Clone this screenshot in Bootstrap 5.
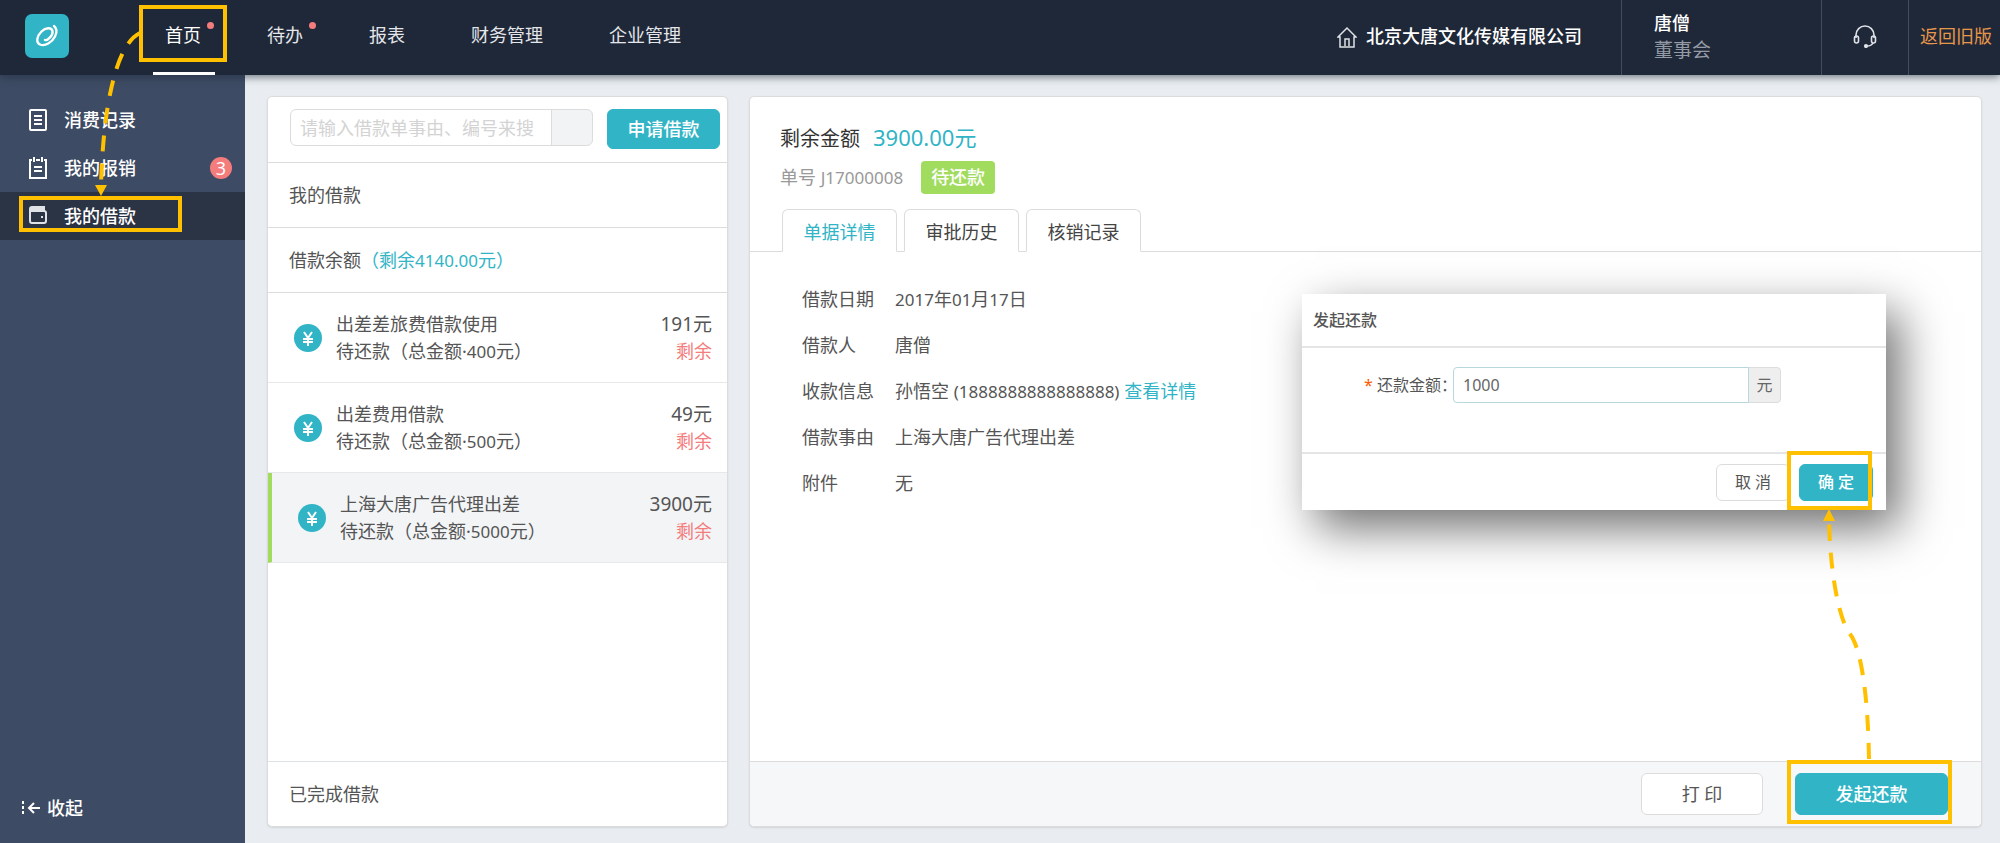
<!DOCTYPE html>
<html lang="zh-CN">
<head>
<meta charset="utf-8">
<meta name="viewport" content="width=device-width, initial-scale=1">
<title>我的借款</title>
<link href="https://cdn.jsdelivr.net/npm/bootstrap@5.3.0/dist/css/bootstrap.min.css" rel="stylesheet">
<style>
  :root { --teal: #31b4c6; --line: #dcdcdc; --mark-color: #ffc000; }
  body { font-family: "Noto Sans", "Noto Sans CJK SC", sans-serif; font-size: 18px; line-height: 27px; color: #555; background: #e9edf1; }
  a { text-decoration: none; }
  .num { font-size: 17px; }
  .teal-text { color: var(--teal); }
  .coral-text { color: #f47c7c; }
  .btn { font-size: 18px; line-height: 27px; border-radius: 6px; border-color: var(--line); color: #555; background: #fff; }
  .btn-teal, .btn-teal:hover { background: var(--teal); border-color: var(--teal); color: #fff; font-weight: 500; }

  /* top bar */
  .topbar { height: 75px; background: #1f2838; color: #fff; box-shadow: 0 2px 8px rgba(31, 40, 56, .6); z-index: 2; }
  .brand-box { width: 132px; padding-left: 25px; }
  .topbar .nav-link { padding: 0 33px 5px; color: #e4e6ea; display: flex; align-items: center; position: relative; }
  .topbar .nav-link.active { color: #fff; }
  .topbar .nav-link.active::after { content: ""; position: absolute; left: 21px; right: 19px; bottom: 0; height: 3px; background: #fff; }
  .dot { position: absolute; top: 22px; right: 20px; width: 7px; height: 7px; border-radius: 50%; background: #f47c7c; }
  .cell { border-left: 1px solid #454d5c; }
  .company { padding: 0 39px 2px 0; gap: 9px; }
  .user-cell { width: 200px; padding: 0 0 2px 32px; }
  .help-cell { width: 87px; padding-bottom: 4px; }
  .back-cell { width: 92px; padding: 0 0 2px 11px; white-space: nowrap; }
  .back-cell a { color: #e8964a; }
  .role-text { color: #959ba6; font-size: 19px; }

  /* side bar */
  .side { width: 245px; background: #3d4b64; padding: 21px 0 21px; }
  .side .nav-link { height: 48px; padding: 0 13px 0 27px; display: flex; align-items: center; gap: 15px; color: #fff; font-weight: 500; position: relative; }
  .side .nav-link.active { background: #2b3445; }
  .count { width: 22px; height: 22px; border-radius: 50%; background: #f47c7c; line-height: 22px; text-align: center; font-weight: 400; }
  .fold { background: none; border: 0; color: #fff; font-weight: 500; padding: 0 20px; gap: 7px; }

  /* panels */
  .work { padding: 21px 18px 16px 22px; gap: 21px; }
  .panel { background: #fff; border: 1px solid var(--line); border-radius: 5px; box-shadow: 0 1px 2px rgba(0, 0, 0, .1); }
  .loans { width: 461px; }
  .bar { height: 65px; padding: 0 21px; border-bottom: 1px solid var(--line); display: flex; align-items: center; }
  .search-bar { height: 66px; padding: 12px 7px 12px 22px; gap: 14px; align-items: flex-start; }
  .search-bar .form-control { font-size: 18px; height: 37px; padding: 0 9px; border-color: var(--line); border-radius: 6px; }
  .search-bar .form-control::placeholder { color: #d3d3d3; }
  .search-bar .input-group-text { width: 42px; background: #f2f3f5; border-color: var(--line); border-radius: 6px; }
  .search-bar .btn { padding: 5px 0; width: 113px; height: 40px; flex: none; }
  .loan { height: 90px; padding: 0 15px 0 26px; gap: 14px; border-bottom: 1px solid #e8e8e8; display: flex; align-items: center; color: #555; }
  .loan.current { background: #f2f4f6; border-left: 4px solid #a1dc5f; }
  .coin { width: 28px; height: 28px; }
  .amount { font-size: 19px; }

  .head { padding: 27px 30px 0; }
  .sum-label { font-size: 20px; color: #333; }
  .sum { font-size: 22px; margin-left: 13px; }
  .doc-no { color: #999; }
  .state { background: #a1dc5f; color: #fff; border-radius: 4px; padding: 3px 10px; margin-left: 18px; font-weight: 500; }
  .nav-tabs { margin-top: 15px; padding-left: 32px; gap: 7px; border-color: var(--line); }
  .nav-tabs .nav-link { width: 115px; height: 43px; padding: 9px 0 7px; text-align: center; color: #444; border: 1px solid var(--line); border-bottom-color: #fff; border-radius: 6px 6px 0 0; }
  .nav-tabs .nav-link.active { color: var(--teal); border-color: var(--line) var(--line) #fff; }
  .facts { padding: 24px 52px; }
  .facts dt { width: 93px; font-weight: 400; }
  .facts dl { margin: 0; height: 46px; display: flex; align-items: center; }
  .facts dd { margin: 0; }
  .foot { height: 65px; padding: 0 33px; gap: 32px; background: #f6f7f9; border-top: 1px solid var(--line); border-radius: 0 0 5px 5px; }
  .foot .btn { height: 42px; }
  .print { width: 122px; }
  .repay { width: 153px; }

  /* repayment dialog, floats over the detail panel */
  .dialog { position: absolute; top: 197px; right: 95px; width: 584px; background: #fff; font-size: 16px; box-shadow: 14px 18px 44px rgba(0, 0, 0, .56); }
  .dialog-title { height: 54px; padding: 0 11px; border-bottom: 2px solid #e5e5e5; font-size: 16px; font-weight: 500; }
  .dialog-body { height: 106px; padding: 19px 105px 0 62px; border-bottom: 2px solid #e5e5e5; }
  .dialog-body label { flex: none; width: 89px; white-space: nowrap; }
  .needed { color: #ff5a00; }
  .dialog-body .form-control { font-size: 16px; height: 36px; padding: 0 9px; color: #666; border-color: #b7d8dc; border-radius: 4px; }
  .dialog-body .input-group-text { width: 33px; padding: 0; justify-content: center; font-size: 16px; color: #666; background: #eee; border-color: #ddd; border-radius: 4px; }
  .dialog-foot { height: 56px; padding: 0 13px; gap: 9px; }
  .dialog-foot .btn { width: 74px; height: 37px; padding: 0; font-size: 16px; }

  /* walkthrough marks */
  .frame { position: absolute; border: 4px solid var(--mark-color); pointer-events: none; }
  .frame-home { left: 7px; right: 7px; top: 5px; height: 57px; }
  .frame-loan { left: 19px; width: 163px; top: 4px; height: 36px; }
  .frame-ok { right: 0; width: 85px; top: -14px; height: 59px; }
  .frame-repay { right: -5px; width: 165px; top: -14px; height: 64px; }
  .trail { position: absolute; pointer-events: none; fill: none; stroke: var(--mark-color); stroke-width: 4; }
  .trail polygon { fill: var(--mark-color); stroke: none; }
  .trail-start { left: 90px; top: 28px; z-index: 3; }
  .trail-end { right: 100px; bottom: 67px; }
</style>
</head>
<body class="min-vh-100 d-flex flex-column position-relative">

<header class="topbar d-flex position-relative">
  <div class="brand-box d-flex align-items-center">
    <a href="#" aria-label="首页" class="d-flex mb-1">
      <svg width="44" height="44" viewBox="0 0 44 44"><rect width="44" height="44" rx="7" fill="#31b4c6"/><path d="M20 26c2.500 1 8.500-5 7.500-9-1-4-7-3.500-11 .5-4.500 4.500-6 11-1.500 13 5 2.200 12-2 15-8 2-4 2-8-1-10.500" fill="none" stroke="#fff" stroke-width="2.400" stroke-linecap="round"/></svg>
    </a>
  </div>
  <nav class="nav">
    <a class="nav-link active" href="#">首页<span class="dot"></span><span class="frame frame-home"></span></a>
    <a class="nav-link" href="#">待办<span class="dot"></span></a>
    <a class="nav-link" href="#">报表</a>
    <a class="nav-link" href="#">财务管理</a>
    <a class="nav-link" href="#">企业管理</a>
  </nav>
  <div class="company d-flex align-items-center ms-auto">
    <svg width="20" height="22" viewBox="0 0 20 22" fill="none" stroke="#dfe2e6" stroke-width="1.500"><path d="M1 11 10 2l9 9h-2v10H3V11zM8 20v-7h4v7"/></svg>
    <span class="fw-medium">北京大唐文化传媒有限公司</span>
  </div>
  <div class="cell user-cell d-flex flex-column justify-content-center">
    <span class="fw-medium">唐僧</span><span class="role-text">董事会</span>
  </div>
  <div class="cell help-cell d-flex align-items-center justify-content-center">
    <svg width="24" height="24" viewBox="0 0 24 24" fill="none" stroke="#dfe2e6" stroke-width="1.600"><path d="M3 14V11a9 9 0 0 1 18 0v3"/><rect x="1.500" y="12" width="4" height="7" rx="2"/><rect x="18.500" y="12" width="4" height="7" rx="2"/><path d="M20 19c-1 2-3 3-6 3"/><circle cx="13" cy="22" r="1.300" fill="#dfe2e6"/></svg>
  </div>
  <div class="cell back-cell d-flex align-items-center"><a href="#">返回旧版</a></div>
</header>

<div class="d-flex flex-grow-1">
  <aside class="side d-flex flex-column">
    <nav class="nav flex-column">
      <a class="nav-link" href="#">
        <svg width="22" height="24" viewBox="0 0 22 24" fill="none" stroke="#fff" stroke-width="2"><rect x="3" y="2" width="16" height="20" rx="1"/><path d="M7 8h8M7 12h8M7 16h8"/></svg>消费记录</a>
      <a class="nav-link" href="#">
        <svg width="22" height="24" viewBox="0 0 22 24" fill="none" stroke="#fff" stroke-width="2"><path d="M5 4H3v18h16V4h-2M9 4h4M7 1v5M15 1v5M7 11h8M7 15h8"/></svg>我的报销<span class="count ms-auto">3</span></a>
      <a class="nav-link active" href="#">
        <svg width="22" height="24" viewBox="0 0 22 24" fill="none" stroke="#dfe2e6" stroke-width="2"><path d="M3 7V5q0-2 2-2h12v4M3 7h14q2 0 2 2v8q0 2-2 2H5q-2 0-2-2zM3 5h14"/><path d="M14 13h2"/></svg>我的借款<span class="frame frame-loan"></span></a>
    </nav>
    <button type="button" class="fold d-flex align-items-center mt-auto"><svg width="20" height="16" viewBox="0 0 20 16" fill="none" stroke="#fff" stroke-width="2"><path d="M3 0v14" stroke-dasharray="3 2"/><path d="M20 7H9M14 2 9 7l5 5"/></svg>收起</button>
  </aside>

  <main class="work d-flex flex-grow-1">
    <section class="panel loans d-flex flex-column">
      <form class="bar search-bar">
        <div class="input-group flex-nowrap">
          <input class="form-control" type="text" placeholder="请输入借款单事由、编号来搜" aria-label="搜索借款单">
          <span class="input-group-text"></span>
        </div>
        <button type="button" class="btn btn-teal">申请借款</button>
      </form>
      <div class="bar">我的借款</div>
      <div class="bar">借款余额<span class="teal-text">（剩余<span class="num">4140.00</span>元）</span></div>
      <a class="loan" href="#">
        <svg class="coin" viewBox="0 0 28 28"><circle cx="14" cy="14" r="14" fill="#31b4c6"/><path d="m10 8 4 6 4-6M9 15h10M9 18h10M14 14v8" fill="none" stroke="#fff" stroke-width="2"/></svg>
        <span>出差差旅费借款使用<br>待还款（总金额·<span class="num">400</span>元）</span>
        <span class="ms-auto text-end"><span class="amount">191元</span><br><span class="coral-text">剩余</span></span>
      </a>
      <a class="loan" href="#">
        <svg class="coin" viewBox="0 0 28 28"><circle cx="14" cy="14" r="14" fill="#31b4c6"/><path d="m10 8 4 6 4-6M9 15h10M9 18h10M14 14v8" fill="none" stroke="#fff" stroke-width="2"/></svg>
        <span>出差费用借款<br>待还款（总金额·<span class="num">500</span>元）</span>
        <span class="ms-auto text-end"><span class="amount">49元</span><br><span class="coral-text">剩余</span></span>
      </a>
      <a class="loan current" href="#">
        <svg class="coin" viewBox="0 0 28 28"><circle cx="14" cy="14" r="14" fill="#31b4c6"/><path d="m10 8 4 6 4-6M9 15h10M9 18h10M14 14v8" fill="none" stroke="#fff" stroke-width="2"/></svg>
        <span>上海大唐广告代理出差<br>待还款（总金额·<span class="num">5000</span>元）</span>
        <span class="ms-auto text-end"><span class="amount">3900元</span><br><span class="coral-text">剩余</span></span>
      </a>
      <div class="bar mt-auto border-bottom-0 border-top">已完成借款</div>
    </section>

    <section class="panel flex-grow-1 d-flex flex-column position-relative">
      <div class="head">
        <div><span class="sum-label">剩余金额</span><span class="sum teal-text">3900.00元</span></div>
        <div class="d-flex align-items-center pt-2"><span class="doc-no">单号 <span class="num">J17000008</span></span><span class="state">待还款</span></div>
      </div>
      <ul class="nav nav-tabs">
        <li class="nav-item"><a class="nav-link active" href="#">单据详情</a></li>
        <li class="nav-item"><a class="nav-link" href="#">审批历史</a></li>
        <li class="nav-item"><a class="nav-link" href="#">核销记录</a></li>
      </ul>
      <div class="facts flex-grow-1">
        <dl><dt>借款日期</dt><dd><span class="num">2017</span>年<span class="num">01</span>月<span class="num">17</span>日</dd></dl>
        <dl><dt>借款人</dt><dd>唐僧</dd></dl>
        <dl><dt>收款信息</dt><dd>孙悟空 <span class="num">(1888888888888888)</span> <a class="teal-text" href="#">查看详情</a></dd></dl>
        <dl><dt>借款事由</dt><dd>上海大唐广告代理出差</dd></dl>
        <dl><dt>附件</dt><dd>无</dd></dl>
      </div>
      <div class="foot d-flex align-items-center justify-content-end">
        <button type="button" class="btn print">打 印</button>
        <button type="button" class="btn btn-teal repay position-relative">发起还款<span class="frame frame-repay"></span></button>
      </div>

      <div class="dialog" role="dialog" aria-labelledby="dialog-title">
        <div class="dialog-title d-flex align-items-center" id="dialog-title">发起还款</div>
        <div class="dialog-body">
          <div class="d-flex align-items-center">
            <label for="repay-sum"><span class="needed">*</span> 还款金额：</label>
            <div class="input-group flex-nowrap">
              <input class="form-control" id="repay-sum" type="text" value="1000">
              <span class="input-group-text">元</span>
            </div>
          </div>
        </div>
        <div class="dialog-foot d-flex align-items-center justify-content-end">
          <button type="button" class="btn">取 消</button>
          <button type="button" class="btn btn-teal position-relative">确 定<span class="frame frame-ok"></span></button>
        </div>
      </div>

      <svg class="trail trail-end" width="60" height="250" viewBox="0 0 60 250">
        <path d="M48 250C47 190 41 141 29 125S9 60 8 10" stroke-dasharray="16 12"/>
        <polygon points="8,0 2,12 14,12"/>
      </svg>
    </section>
  </main>
</div>

<svg class="trail trail-start" width="60" height="170" viewBox="0 0 60 170">
  <path d="M50 5C25 17 13 82 11 158" stroke-dasharray="16 12"/>
  <polygon points="11,168 5,157 17,157"/>
</svg>

<script src="https://cdn.jsdelivr.net/npm/bootstrap@5.3.0/dist/js/bootstrap.bundle.min.js"></script>
</body>
</html>
